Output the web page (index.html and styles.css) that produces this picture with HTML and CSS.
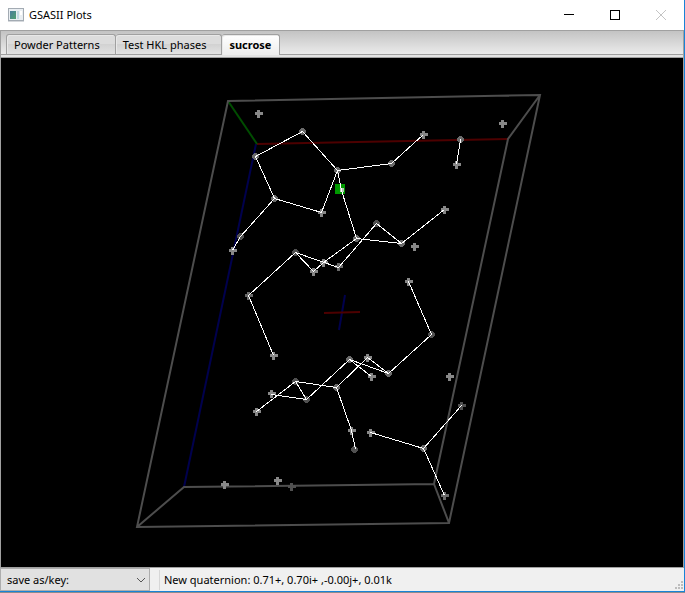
FILE: index.html
```
<!DOCTYPE html>
<html lang="en">
<head>
<meta charset="utf-8">
<title>GSASII Plots</title>
<link rel="stylesheet" href="styles.css">
</head>
<body>
<div class="window">
  <header class="titlebar">
    <svg class="app-icon" width="16" height="14" viewBox="0 0 16 14" aria-hidden="true">
      <defs>
        <linearGradient id="pane" x1="0" y1="0" x2="1" y2="1">
          <stop offset="0" stop-color="#4a7d9c"/><stop offset="1" stop-color="#4fa070"/>
        </linearGradient>
      </defs>
      <rect x=".5" y=".5" width="15" height="12" fill="#e9eef2" stroke="#a3abb3"/>
      <path d="M0 13.5h16" stroke="#d5d8dc"/>
      <rect x="2" y="3" width="6" height="8" fill="url(#pane)"/>
      <rect x="9" y="3" width="2" height="8" fill="#c3d9e2"/>
      <rect x="12" y="3" width="2" height="4" fill="#fff"/>
    </svg>
    <h1 class="title">GSASII Plots</h1>
    <div class="controls">
      <button class="control" type="button" aria-label="Minimize"><svg width="10" height="10" viewBox="0 0 10 10"><path d="M0 4.5h10" stroke="#000"/></svg></button>
      <button class="control" type="button" aria-label="Maximize"><svg width="10" height="10" viewBox="0 0 10 10"><rect x=".5" y=".5" width="9" height="9" fill="none" stroke="#000"/></svg></button>
      <button class="control" type="button" aria-label="Close" disabled><svg width="10" height="10" viewBox="0 0 10 10"><path d="M0 0l10 10M10 0L0 10" stroke="#c4c4c4"/></svg></button>
    </div>
  </header>
  <nav class="tabs" role="tablist">
    <button class="tab" type="button" role="tab" aria-selected="false">Powder Patterns</button>
    <button class="tab" type="button" role="tab" aria-selected="false">Test HKL phases</button>
    <button class="tab tab-active" type="button" role="tab" aria-selected="true">sucrose</button>
  </nav>
  <main class="plot">
    <svg class="scene" viewBox="1 58 682 509" role="img" aria-label="sucrose unit cell">
      <defs>
        <path id="near" d="M-4-2h8v3h-8zM-2-4h3v8h-3z"/>
        <path id="far" d="M-3-1h7v3h-7zM-1-3h3v7h-3zM-2-2h5v5h-5z"/>
      </defs>
      <g class="cell">
        <path d="M256 144L184 487" stroke="#00004d"/>
        <path d="M257 144L508 139" stroke="#4d0000"/>
        <path d="M228 101L257 144" stroke="#004d00"/>
        <path d="M228 101L540 95L449 523L137 527ZM540 95L508 139L434 484L184 487L137 527M434 484L449 523"/>
        <path d="M345 295L339 330" stroke="#00004d"/>
        <path d="M324 313L360 312" stroke="#4d0000"/>
      </g>
      <g class="atoms">
        <rect x="335" y="184" width="10" height="10" fill="#009900"/>
        <g fill="#888">
          <use href="#near" x="259" y="114"/><use href="#near" x="503" y="124"/><use href="#near" x="424" y="135"/>
          <use href="#near" x="457" y="165"/><use href="#near" x="322" y="213"/><use href="#near" x="445" y="210"/>
          <use href="#near" x="415" y="247"/><use href="#near" x="233" y="251"/><use href="#near" x="324" y="263"/>
          <use href="#near" x="314" y="272"/><use href="#near" x="409" y="282"/><use href="#near" x="274" y="356"/>
          <use href="#near" x="368" y="358"/><use href="#near" x="372" y="377"/><use href="#near" x="450" y="377"/>
          <use href="#near" x="272" y="394"/><use href="#near" x="257" y="412"/><use href="#near" x="352" y="431"/>
          <use href="#near" x="371" y="433"/><use href="#near" x="225" y="485"/><use href="#near" x="278" y="481"/>
        </g>
        <g fill="#6a6a6a">
          <use href="#far" x="302" y="131"/><use href="#far" x="255" y="156"/><use href="#far" x="337" y="170"/>
          <use href="#far" x="274" y="198"/><use href="#far" x="391" y="163"/><use href="#far" x="460" y="139"/>
          <use href="#far" x="356" y="238"/><use href="#far" x="401" y="243"/><use href="#near" x="339" y="267"/>
          <use href="#near" x="249" y="296"/><use href="#far" x="388" y="373"/><use href="#far" x="349" y="359"/>
          <use href="#far" x="336" y="387"/><use href="#far" x="423" y="448"/><use href="#near" x="445" y="496"/>
        </g>
        <g fill="#505050">
          <use href="#far" x="240" y="236"/><use href="#far" x="376" y="223"/><use href="#far" x="295" y="252"/>
          <use href="#far" x="431" y="334"/><use href="#far" x="295" y="381"/><use href="#far" x="306" y="399"/>
          <use href="#far" x="354" y="449"/><use href="#near" x="462" y="406"/><use href="#near" x="292" y="487"/>
        </g>
        <rect x="340" y="188" width="4" height="4" fill="#b4c8b4"/>
      </g>
      <g class="bonds" transform="translate(.5 .5)">
        <path d="M302 131L255 156L274 198L321 212L337 170ZM337 170L391 163L423 134"/>
        <path d="M337 170L341 190L356 238L401 243L444 209M401 243L376 223L338 267L295 252L313 271L323 262L356 238"/>
        <path d="M295 252L248 295L273 355M274 198L240 236L232 250M460 139L456 164"/>
        <path d="M408 281L431 334L388 373L367 357L336 387L295 381L306 399L271 394M306 399L349 359L388 373M349 359L371 376M295 381L256 411"/>
        <path d="M336 387L351 430L355 449M370 432L423 448L461 405M423 448L444 495"/>
      </g>
    </svg>
  </main>
  <footer class="status">
    <select class="save" aria-label="save as/key">
      <option>save as/key:</option>
    </select>
    <svg class="chevron" width="10" height="6" viewBox="0 0 10 6" aria-hidden="true"><path d="M1 1L5 5L9 1" fill="none" stroke="#555"/></svg>
    <output class="message">New quaternion: 0.71+, 0.70i+ ,-0.00j+, 0.01k</output>
    <svg class="grip" width="8" height="8" viewBox="0 0 8 8" aria-hidden="true"><path d="M6 0h2v2h-2zM3 3h2v2h-2zM6 3h2v2h-2zM0 6h2v2h-2zM3 6h2v2h-2zM6 6h2v2h-2z" fill="#bdbdbd"/></svg>
  </footer>
</div>
</body>
</html>
```
FILE: styles.css
```
* {
  box-sizing: border-box;
}

body {
  margin: 0;
  background: #8c8c8c;
  font: 11px/16px "Noto Sans", "Open Sans", sans-serif;
  color: #000;
}

button,
select {
  font: inherit;
  color: inherit;
}

.window {
  display: flex;
  flex-direction: column;
  height: calc(100vh - 1px);
  border-right: 1px solid #1883d7;
  border-bottom: 1px solid #1883d7;
  background: #f0f0f0;
}

.titlebar {
  display: flex;
  align-items: center;
  height: 30px;
  padding-left: 8px;
  background: #fff;
}

.title {
  margin: 0 0 0 5px;
  font-size: 11px;
  font-weight: 400;
}

.controls {
  display: flex;
  margin-left: auto;
}

.control {
  display: flex;
  align-items: center;
  justify-content: center;
  width: 46px;
  height: 28px;
  padding: 0;
  border: 0;
  background: none;
}

.tabs {
  display: flex;
  align-items: flex-end;
  height: 25px;
  padding-left: 5px;
  border: 1px solid #a0a0a0;
  background: linear-gradient(#c3c3c3, #ebebeb);
}

.tab {
  height: 20px;
  padding: 0 15px 0 7px;
  border: 1px solid #a0a0a0;
  border-bottom: 0;
  border-radius: 3px 3px 0 0;
  background: linear-gradient(#dcdcdc 50%, #d2d2d2 50%, #e2e2e2);
  box-shadow: inset 1px 1px #e8e8e8;
  line-height: 18px;
  white-space: nowrap;
}

.tab + .tab {
  border-left: 0;
}

.tab-active {
  height: 21px;
  margin-bottom: -1px;
  padding-right: 8px;
  background: linear-gradient(#fff, #ededed);
  font-weight: 700;
}

.plot {
  flex: 1;
  min-height: 0;
  padding-top: 3px;
  border: 1px solid #a0a0a0;
  border-top: 0;
  background: linear-gradient(#e4e4e4 2px, #a0a0a0 2px, #a0a0a0 3px, #000 3px);
}

.scene {
  display: block;
  width: 100%;
  height: 100%;
}

.cell {
  fill: none;
  stroke: #4d4d4d;
  stroke-width: 2;
}

.atoms {
  shape-rendering: crispEdges;
}

.bonds {
  fill: none;
  stroke: #fff;
  shape-rendering: crispEdges;
}

.status {
  display: flex;
  align-items: center;
  height: 23px;
}

.save {
  width: 150px;
  height: 23px;
  padding: 0 6px;
  border: 1px solid #adadad;
  border-radius: 0;
  background: #e1e1e1;
  appearance: none;
}

.chevron {
  margin-left: -14px;
  pointer-events: none;
}

.message {
  flex: 1;
  margin-left: 13px;
  padding-left: 4px;
  border-left: 1px solid #d7d7d7;
  line-height: 20px;
}

.grip {
  align-self: flex-end;
  margin: 0 1px 2px 0;
}
```
